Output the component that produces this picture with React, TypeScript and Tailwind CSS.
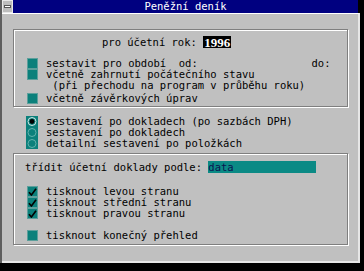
const mono = "font-['DejaVu_Sans_Mono','Liberation_Mono',monospace] text-[10.5px] leading-[11px] text-black";

function Box({ checked }: { checked?: boolean }) {
  return (
    <span className="flex h-[11px] w-[11px] shrink-0 items-center justify-center border border-[#5d9f9b] bg-[#0b807b]">
      {checked ? (
        <svg width="9" height="8" viewBox="0 0 9 8">
          <path d="M1 4.2 L3.4 7 L8 0.8" fill="none" stroke="#000" strokeWidth="1.6" />
        </svg>
      ) : null}
    </span>
  );
}

function CheckRow({ label, checked, className = "" }: { label: string; checked?: boolean; className?: string }) {
  return (
    <div className={`flex h-[11px] items-center gap-[8px] pl-[13px] ${className}`}>
      <Box checked={checked} />
      <span className="whitespace-pre">{label}</span>
    </div>
  );
}

function Radio({ on }: { on?: boolean }) {
  return (
    <svg width="12" height="11" viewBox="0 0 12 11" className="shrink-0">
      <rect width="12" height="11" fill="#0b807b" />
      <circle cx="6" cy="5.5" r="4" fill="none" stroke={on ? "#cfe6e4" : "#62b3ad"} strokeWidth="1" />
      {on ? <circle cx="6" cy="5.5" r="2.4" fill="#000" /> : null}
    </svg>
  );
}

const etched = "border border-[#7f7f7f] shadow-[inset_1px_1px_0_#ffffff,1px_1px_0_#ffffff]";

export default function App() {
  return (
    <div className={`h-[271px] w-[364px] overflow-hidden bg-black ${mono}`}>
      <div className="flex h-[263px] w-[360px] flex-col border-l-2 border-[#5e5e5e] bg-[#c0c0c0]">
        <div className="flex h-[13px] shrink-0">
          <div className="flex w-[11px] items-center justify-center border border-[#e8e8e8] bg-[#bdbdbd]">
            <span className="h-[3px] w-[7px] border border-[#555] bg-white" />
          </div>
          <div className="flex flex-1 items-center justify-center bg-[#000080] text-[10.5px] text-white">
            Peněžní deník
          </div>
          <div className="w-[2px] bg-black" />
        </div>

        <div className="flex flex-1 flex-col border-t border-r-2 border-b-2 border-t-white border-r-[#e6e6e6] border-b-[#e6e6e6] pl-[11px]">
          <div className={`mt-[15px] h-[78px] w-[335px] ${etched}`}>
            <div className="mt-[6px] flex h-[12px] items-center pl-[88px]">
              <span className="whitespace-pre">pro účetní rok: </span>
              <span className="flex h-[12px] items-center bg-black px-[1px] font-['Liberation_Serif',serif] text-[13px] font-bold text-white">
                1996
              </span>
            </div>
            <div className="mt-[10px]">
              <CheckRow label={"sestavit pro období  od:                  do:"} />
              <CheckRow label="včetně zahrnutí počátečního stavu" />
              <div className="flex h-[11px] items-center pl-[32px]">
                <span className="whitespace-pre"> (při přechodu na program v průběhu roku)</span>
              </div>
              <CheckRow label="včetně závěrkových úprav" className="mt-[2px]" />
            </div>
          </div>

          <div className="mt-[9px] flex flex-col">
            {[
              { label: "sestavení po dokladech (po sazbách DPH)", on: true },
              { label: "sestavení po dokladech", on: false },
              { label: "detailní sestavení po položkách", on: false },
            ].map((r) => (
              <div key={r.label} className="flex h-[11px] items-center gap-[8px] pl-[13px]">
                <Radio on={r.on} />
                <span className="whitespace-pre">{r.label}</span>
              </div>
            ))}
          </div>

          <div className={`mt-[4px] h-[92px] w-[335px] ${etched}`}>
            <div className="mt-[7px] flex h-[12px] items-center pl-[11px]">
              <span className="whitespace-pre">třídit účetní doklady podle: </span>
              <span className="flex h-[12px] w-[108px] items-center bg-[#0b8a85] text-[#0a1450]">data</span>
            </div>
            <div className="mt-[13px]">
              <CheckRow label="tisknout levou stranu" checked />
              <CheckRow label="tisknout střední stranu" checked />
              <CheckRow label="tisknout pravou stranu" checked />
              <CheckRow label="tisknout konečný přehled" className="mt-[11px]" />
            </div>
          </div>
        </div>
      </div>
    </div>
  );
}
